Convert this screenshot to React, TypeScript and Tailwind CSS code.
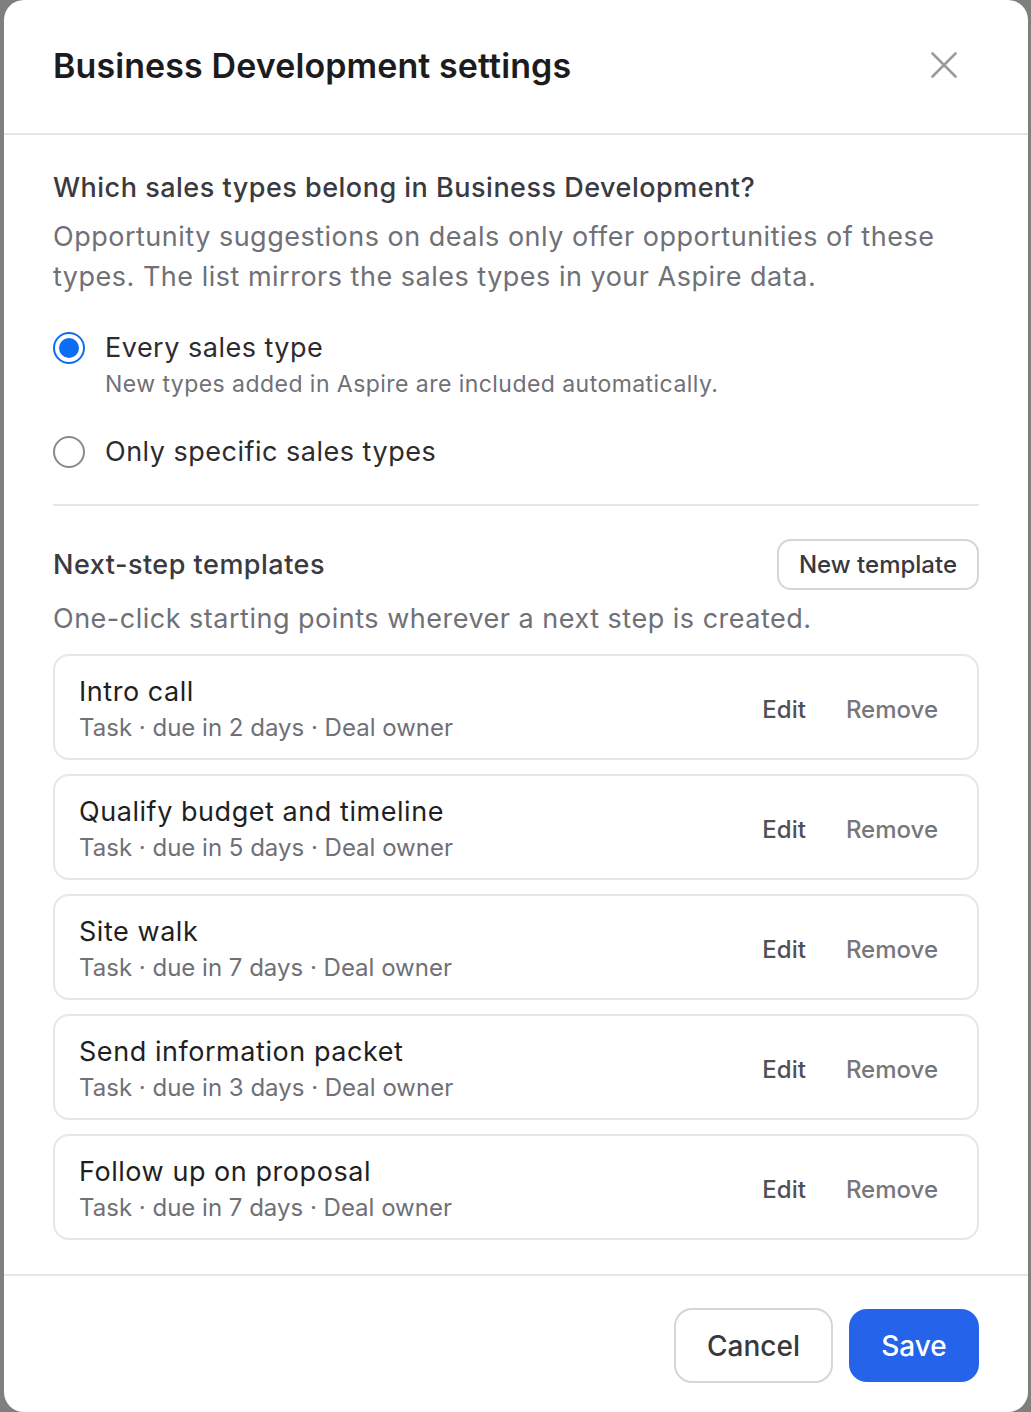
import React, { useState } from 'react';

const templates = [
  { id: 1, name: 'Intro call', meta: 'Task · due in 2 days · Deal owner' },
  { id: 2, name: 'Qualify budget and timeline', meta: 'Task · due in 5 days · Deal owner' },
  { id: 3, name: 'Site walk', meta: 'Task · due in 7 days · Deal owner' },
  { id: 4, name: 'Send information packet', meta: 'Task · due in 3 days · Deal owner' },
  { id: 5, name: 'Follow up on proposal', meta: 'Task · due in 7 days · Deal owner' },
];

const Radio = ({ checked }: { checked: boolean }) => (
  <span
    className={`flex items-center justify-center w-[32px] h-[32px] rounded-full border-[2px] shrink-0 ${
      checked ? 'border-[#0b6cf4]' : 'border-[#8a8a8e]'
    }`}
  >
    {checked && <span className="w-[20px] h-[20px] rounded-full bg-[#0b6cf4]"></span>}
  </span>
);

export default function App() {
  const [mode, setMode] = useState<'all' | 'specific'>('all');

  return (
    <div
      className="h-[1412px] bg-[#7f7f7f] pl-[4px] pr-[3px]"
      style={{ fontFamily: 'Inter, "Noto Sans", sans-serif' }}
    >
      <div className="h-full bg-white rounded-[20px] flex flex-col overflow-hidden">
        {/* Header */}
        <div className="h-[135px] shrink-0 flex items-center justify-between pl-[49px] pr-[71px] border-b-[2px] border-[#e6e6e6]">
          <h1 className="text-[34px] leading-[44px] font-semibold text-[#1c1c1e] tracking-[0.1px] mt-[-2px]">
            Business Development settings
          </h1>
          <button type="button" className="w-[26px] h-[26px] flex items-center justify-center mt-[-4px]">
            <svg width="26" height="26" viewBox="0 0 26 26" fill="none">
              <path d="M1.5 1.5 L24.5 24.5 M24.5 1.5 L1.5 24.5" stroke="#9b9b9f" strokeWidth="2.6" strokeLinecap="round" />
            </svg>
          </button>
        </div>

        {/* Body */}
        <div className="flex-1 px-[49px] pt-[35px] pb-[34px] border-b-[2px] border-[#e6e6e6]">
          <h2 className="text-[27px] leading-[36px] font-medium tracking-[0.5px] text-[#3a3a3f]">
            Which sales types belong in Business Development?
          </h2>
          <p className="mt-[11px] text-[27px] leading-[40px] tracking-[0.5px] text-[#707077]">
            Opportunity suggestions on deals only offer opportunities of these types. The list mirrors the sales
            types in your Aspire data.
          </p>

          <div className="mt-[33px] flex flex-col gap-[35px]">
            <button type="button" onClick={() => setMode('all')} className="flex items-start gap-[20px] text-left">
              <span className="mt-[2px]"><Radio checked={mode === 'all'} /></span>
              <span>
                <span className="block text-[27px] leading-[36px] tracking-[0.5px] text-[#2c2c30]">Every sales type</span>
                <span className="block mt-[3px] text-[23px] leading-[30px] tracking-[0.45px] text-[#707077]">
                  New types added in Aspire are included automatically.
                </span>
              </span>
            </button>
            <button type="button" onClick={() => setMode('specific')} className="flex items-center gap-[20px] text-left">
              <Radio checked={mode === 'specific'} />
              <span className="text-[27px] leading-[36px] tracking-[0.5px] text-[#2c2c30]">Only specific sales types</span>
            </button>
          </div>

          <div className="mt-[34px] h-[2px] bg-[#e6e6e6]"></div>

          <div className="mt-[33px] flex items-center justify-between">
            <h2 className="text-[27px] leading-[36px] font-medium tracking-[0.5px] text-[#3a3a3f]">Next-step templates</h2>
            <button
              type="button"
              className="h-[51px] px-[20px] rounded-[14px] border-[2px] border-[#d6d6d8] text-[24px] font-medium text-[#38383d]"
            >
              New template
            </button>
          </div>
          <p className="mt-[9px] text-[27px] leading-[40px] tracking-[0.5px] text-[#707077]">
            One-click starting points wherever a next step is created.
          </p>

          <div className="mt-[15px] flex flex-col gap-[14px]">
            {templates.map(t => (
              <div
                key={t.id}
                className="h-[106px] rounded-[16px] border-[2px] border-[#e6e6e8] flex items-center justify-between pl-[24px] pr-[39px] pt-[5px]"
              >
                <div>
                  <div className="text-[27px] leading-[34px] tracking-[0.55px] text-[#1f1f23]">{t.name}</div>
                  <div className="mt-[3px] text-[24px] leading-[32px] text-[#707077]">{t.meta}</div>
                </div>
                <div className="flex items-center gap-[40px]">
                  <button type="button" className="text-[24px] font-medium text-[#505056]">Edit</button>
                  <button type="button" className="text-[24px] font-medium text-[#76767d]">Remove</button>
                </div>
              </div>
            ))}
          </div>
        </div>

        {/* Footer */}
        <div className="shrink-0 h-[137px] flex items-start justify-end gap-[16px] pr-[49px] pt-[32px]">
          <button
            type="button"
            className="h-[75px] w-[159px] rounded-[18px] border-[2px] border-[#d6d6d8] text-[28px] font-medium text-[#38383d]"
          >
            Cancel
          </button>
          <button
            type="button"
            className="h-[73px] w-[130px] mt-[1px] rounded-[18px] bg-[#2563eb] text-[28px] font-medium text-white"
          >
            Save
          </button>
        </div>
      </div>
    </div>
  );
}
